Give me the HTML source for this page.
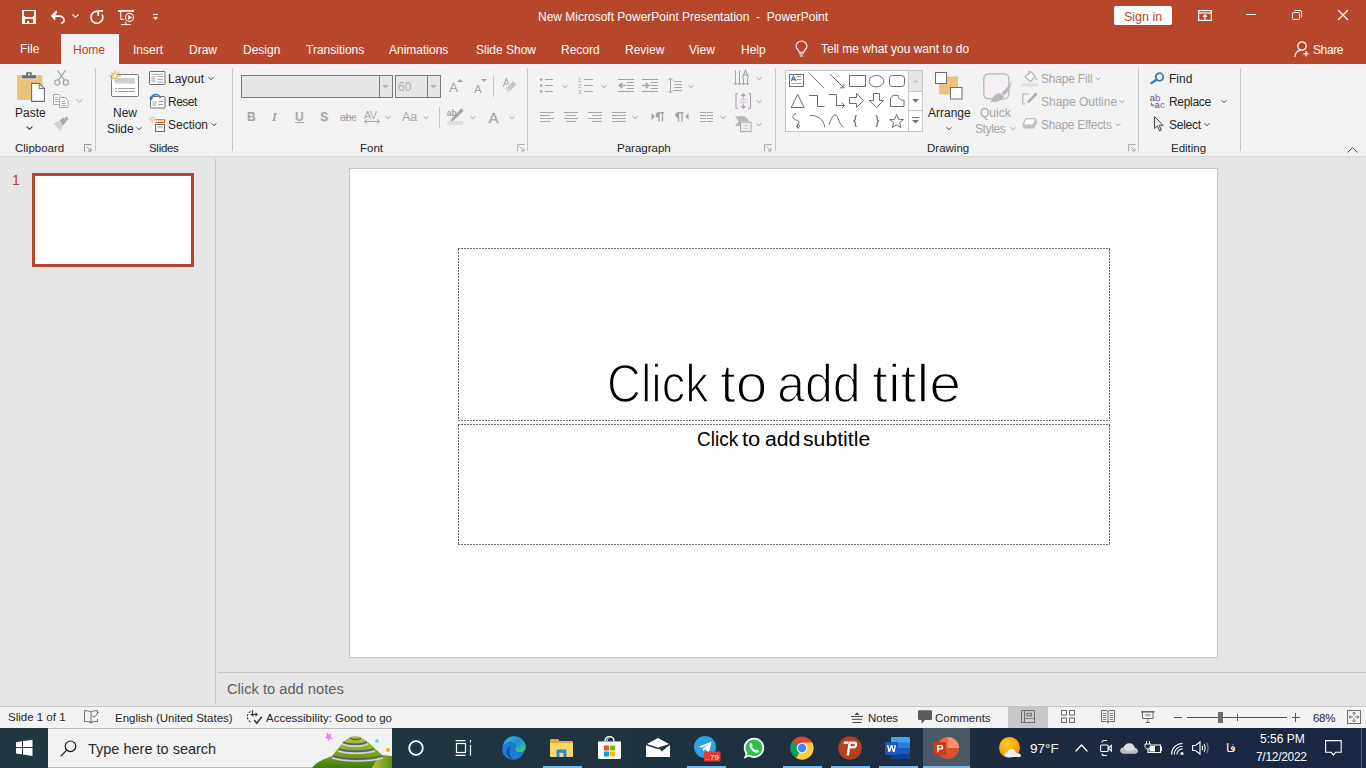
<!DOCTYPE html>
<html><head><meta charset="utf-8">
<style>
*{margin:0;padding:0;box-sizing:border-box}
html,body{width:1366px;height:768px;overflow:hidden;background:#e6e6e6;font-family:"Liberation Sans",sans-serif;color:#262626}
.a{position:absolute}
.t{position:absolute;white-space:nowrap;line-height:1}
svg{position:absolute;overflow:visible}
#top{left:0;top:0;width:1366px;height:64px;background:#b7472a}
#ribbon{left:0;top:64px;width:1366px;height:93px;background:#f3f3f3;border-bottom:1px solid #d6d6d6}
.sep{position:absolute;width:1px;background:#c8c8c8}
.w{color:#fff}
.gl{font-size:11.5px;color:#262626}
.dis{color:#a6a6a6}
</style></head><body>
<!-- title bar + tabs -->
<div id="top" class="a"></div>
<div class="t w" style="left:538px;top:11px;font-size:12px">New Microsoft PowerPoint Presentation&nbsp; -&nbsp; PowerPoint</div>
<div class="a" style="left:1114px;top:6px;width:58px;height:19px;background:#fff;border-radius:2px"></div>
<div class="t" style="left:1124px;top:11px;font-size:12.5px;color:#b7472a">Sign in</div>

<!-- QAT icons -->
<svg style="left:22px;top:10px" width="14" height="14" viewBox="0 0 14 14"><path d="M0 0H14V14H0Z" fill="#fff"/><path d="M2 1H12V6H11V7H3V6H2Z" fill="#b7472a"/><path d="M3 9H11V13H7.1V11H4.9V13H3Z" fill="#b7472a"/></svg>
<svg style="left:50px;top:9px" width="16" height="15" viewBox="0 0 16 15"><path d="M4 7.2H9C12 7.2 14 9.2 14 11.3C14 13 13 13.8 11.5 14" fill="none" stroke="#fff" stroke-width="1.7" stroke-linecap="round"/><path d="M6.5 1.2L0.8 6.8L5 11.5L5.5 8.5L4.5 7.2L7 4Z" fill="#fff"/></svg>
<svg style="left:72px;top:14px" width="7" height="4" viewBox="0 0 7 4" fill="none" stroke="#fff" stroke-width="1.1"><path d="M0.5 0.5L3.5 3.3L6.5 0.5"/></svg>
<svg style="left:89px;top:10px" width="15" height="14" viewBox="0 0 15 14" fill="none" stroke="#fff" stroke-width="1.6"><path d="M8.4 1.3A6 6 0 1 0 13.2 4.5"/><path d="M8.5 0.9H14M9.2 0.9V6"/></svg>
<svg style="left:118px;top:10px" width="17" height="16" viewBox="0 0 17 16" fill="none" stroke="#fff"><path d="M0 0.9H16" stroke-width="1.8"/><path d="M2.8 1.5V9.3H6" stroke-width="1.1"/><circle cx="11.5" cy="7.4" r="4" stroke-width="1.1"/><path d="M10.6 5.6L13.6 7.5L10.6 9.4Z" fill="#fff" stroke-width="0.6"/><path d="M3 14.6H12.8" stroke-width="1"/><path d="M7.3 12L8.3 13.8" stroke-width="1.1"/></svg>
<svg style="left:153px;top:14px" width="5" height="6" viewBox="0 0 5 6" fill="#fff"><rect x="0" y="0" width="5" height="1"/><path d="M0 3H5L2.5 6Z"/></svg>
<!-- window controls -->
<svg style="left:1198px;top:10px" width="14" height="11" viewBox="0 0 14 11" fill="none" stroke="#fff" stroke-width="1.2"><rect x="0.6" y="0.6" width="12.8" height="9.8"/><path d="M0.6 3H13.4"/><path d="M7 10V5M5 6.8L7 4.8L9 6.8"/></svg>
<svg style="left:1246px;top:14px" width="10" height="1" viewBox="0 0 10 1"><rect width="10" height="1" fill="#fff"/></svg>
<svg style="left:1292px;top:10px" width="10" height="10" viewBox="0 0 10 10" fill="none" stroke="#fff" stroke-width="1"><rect x="0.5" y="2.5" width="7" height="7" rx="1"/><path d="M2.5 0.5H8A1.5 1.5 0 0 1 9.5 2V7.5"/></svg>
<svg style="left:1338px;top:10px" width="10" height="10" viewBox="0 0 10 10" fill="none" stroke="#fff" stroke-width="1.1"><path d="M0 0L10 10M10 0L0 10"/></svg>
<!-- lightbulb & share -->
<svg style="left:795px;top:41px" width="13" height="16" viewBox="0 0 13 16" fill="none" stroke="#fff" stroke-width="1.1"><path d="M4.2 11.2C4.2 9.2 1 8 1 5.5A5.5 5.5 0 0 1 12 5.5C12 8 8.8 9.2 8.8 11.2Z"/><path d="M4.3 13H8.7M5 15H8"/></svg>
<svg style="left:1294px;top:41px" width="16" height="16" viewBox="0 0 16 16" fill="none" stroke="#fff" stroke-width="1.2"><circle cx="8" cy="5" r="4.2"/><path d="M0.8 15.8C1.5 11.5 4 9.3 7 9.1"/><path d="M12 10V15.5M9.3 12.8H14.7"/></svg>

<!-- tabs -->
<div class="a" style="left:61px;top:34px;width:58px;height:30px;background:#f3f3f3"></div>
<div class="t w" style="left:20px;top:43px;font-size:12px">File</div>
<div class="t" style="left:73px;top:44px;font-size:12px;color:#b7472a">Home</div>
<div class="t w" style="left:133px;top:44px;font-size:12px">Insert</div>
<div class="t w" style="left:189px;top:44px;font-size:12px">Draw</div>
<div class="t w" style="left:243px;top:44px;font-size:12px">Design</div>
<div class="t w" style="left:306px;top:44px;font-size:12px">Transitions</div>
<div class="t w" style="left:389px;top:44px;font-size:12px">Animations</div>
<div class="t w" style="left:476px;top:44px;font-size:12px">Slide Show</div>
<div class="t w" style="left:561px;top:44px;font-size:12px">Record</div>
<div class="t w" style="left:625px;top:44px;font-size:12px">Review</div>
<div class="t w" style="left:689px;top:44px;font-size:12px">View</div>
<div class="t w" style="left:741px;top:44px;font-size:12px">Help</div>
<div class="t w" style="left:821px;top:43px;font-size:12px">Tell me what you want to do</div>
<div class="t w" style="left:1313px;top:44px;font-size:12px;letter-spacing:-0.4px">Share</div>

<!-- ribbon -->
<div id="ribbon" class="a"></div>
<div class="sep" style="left:95px;top:68px;height:83px"></div>
<div class="sep" style="left:232px;top:68px;height:83px"></div>
<div class="sep" style="left:527px;top:68px;height:83px"></div>
<div class="sep" style="left:775px;top:68px;height:83px"></div>
<div class="sep" style="left:1138px;top:68px;height:83px"></div>
<div class="sep" style="left:1240px;top:68px;height:83px"></div>
<div class="t gl" style="left:15px;top:143px">Clipboard</div>
<div class="t gl" style="left:149px;top:143px;letter-spacing:-0.3px">Slides</div>
<div class="t gl" style="left:360px;top:143px">Font</div>
<div class="t gl" style="left:617px;top:143px">Paragraph</div>
<div class="t gl" style="left:927px;top:143px">Drawing</div>
<div class="t gl" style="left:1171px;top:143px">Editing</div>


<!-- Clipboard group -->
<svg style="left:17px;top:72px" width="29" height="31" viewBox="0 0 29 31">
<path d="M2 3H24A1.5 1.5 0 0 1 25.5 4.5V26.5A1.5 1.5 0 0 1 24 28H1.5A1.5 1.5 0 0 1 0 26.5V4.5A1.5 1.5 0 0 1 1.5 3Z" fill="#ebc47c"/>
<path d="M5 3.2H19V6.8H5Z" fill="#6e6e6e"/><path d="M9.3 0.2H14.7V3.5H9.3Z" fill="#6e6e6e"/><rect x="11.2" y="1.6" width="1.8" height="1.8" fill="#f3f3f3"/>
<path d="M3.8 6.9H20.2" stroke="#f3f3f3" stroke-width="0.8"/>
<path d="M14.6 11.4H22.2L27.4 16.6V29.4H14.6Z" fill="#fff" stroke="#6e6e6e" stroke-width="1.1"/><path d="M22.2 11.4V16.6H27.4" fill="none" stroke="#6e6e6e" stroke-width="1"/>
</svg>
<div class="t" style="left:15px;top:107px;font-size:12px;color:#262626">Paste</div>
<svg style="left:26px;top:126px" width="7" height="4" viewBox="0 0 7 4" fill="none" stroke="#444" stroke-width="1.1"><path d="M0.6 0.6L3.5 3.2L6.4 0.6"/></svg>
<svg style="left:54px;top:70px" width="15" height="16" viewBox="0 0 15 16" fill="none" stroke="#a8a8a8" stroke-width="1.3"><circle cx="3.2" cy="12.5" r="2.6"/><circle cx="11.8" cy="12.5" r="2.6"/><path d="M4.6 10.2L11.5 0.3M10.4 10.2L3.5 0.3"/></svg>
<svg style="left:53px;top:94px" width="16" height="14" viewBox="0 0 16 14" fill="#fff" stroke="#a8a8a8" stroke-width="1"><path d="M0.5 0.5H6L8 2.5V10.5H0.5Z"/><path d="M2 3.5H5M2 5.5H6M2 7.5H6" fill="none"/><path d="M6.5 3.5H12.5L15 6V13.5H6.5Z"/><path d="M8.5 7.5H12M8.5 9.5H13M8.5 11.5H13" fill="none"/></svg>
<svg style="left:76px;top:99px" width="7" height="4" viewBox="0 0 7 4" fill="none" stroke="#a8a8a8" stroke-width="1"><path d="M0.6 0.6L3.5 3.2L6.4 0.6"/></svg>
<svg style="left:53px;top:117px" width="16" height="14" viewBox="0 0 16 14"><path d="M0.5 6.5L6 3.8L10 9L7.5 13.8Z" fill="#d4d0d4"/><path d="M6.5 3.5L10.5 0.5L13.5 4.5L10 8.6Z" fill="#a8a8a8"/><path d="M11.5 1.2L13.5 -0.5L15.6 2L13.6 3.9Z" fill="#a8a8a8"/></svg>
<svg style="left:84px;top:144px" width="8" height="8" viewBox="0 0 8 8" fill="none" stroke="#8a8a8a" stroke-width="0.9"><path d="M0.5 7.5V0.5H7.5"/><path d="M2.5 2.5L7 7M7 4V7H4"/></svg>

<!-- Slides group -->
<svg style="left:109px;top:70px" width="31" height="28" viewBox="0 0 31 28">
<rect x="2.5" y="4.5" width="27" height="22" rx="1.2" fill="#fff" stroke="#7a7a7a" stroke-width="1"/>
<rect x="6" y="8" width="20" height="5.6" fill="#d0d0d0"/>
<path d="M6 18.6H8M9.2 18.6H26M6 21.5H8M9.2 21.5H26" stroke="#8a8a8a" stroke-width="0.9"/>
<g stroke="#ebc47c" stroke-width="1.4"><path d="M6 0V11.8M0 6H12M1.8 1.8L10.2 10.2M10.2 1.8L1.8 10.2"/></g><circle cx="6" cy="6" r="3" fill="#ebc47c"/><circle cx="6" cy="6" r="1.8" fill="#fff"/>
</svg>
<div class="t" style="left:113px;top:107px;font-size:12px">New</div>
<div class="t" style="left:107px;top:123px;font-size:12px">Slide</div>
<svg style="left:136px;top:127px" width="6" height="3" viewBox="0 0 6 3" fill="none" stroke="#444" stroke-width="1"><path d="M0.5 0.4L3 2.6L5.5 0.4"/></svg>
<svg style="left:149px;top:71px" width="17" height="14" viewBox="0 0 17 14" fill="none" stroke="#6e6e6e" stroke-width="1"><rect x="0.5" y="0.5" width="15.5" height="13" rx="0.8" fill="#fff"/><path d="M2.3 3.3H14.2" stroke="#b8b8b8" stroke-width="1.2"/><rect x="2.3" y="5" width="4.3" height="6.3" fill="#d0d0d0" stroke="none"/><path d="M8.3 5.5H14M8.3 8.3H14M8.3 11H14" stroke="#9a9a9a" stroke-width="0.9"/></svg>
<div class="t" style="left:168px;top:73px;font-size:12px">Layout</div>
<svg style="left:208px;top:77px" width="6" height="3" viewBox="0 0 6 3" fill="none" stroke="#444" stroke-width="1"><path d="M0.5 0.4L3 2.6L5.5 0.4"/></svg>
<svg style="left:149px;top:93px" width="17" height="16" viewBox="0 0 17 16"><rect x="1.5" y="3.5" width="14.5" height="11.5" rx="0.8" fill="#fff" stroke="#6e6e6e" stroke-width="1"/><rect x="3.5" y="8" width="4" height="5" fill="#d0d0d0"/><path d="M9.3 8.5H14M9.3 11.5H14" stroke="#9a9a9a" stroke-width="1"/><path d="M11.5 5C10.5 2.2 7.5 1 5 1.8C3.5 2.3 2.5 3.5 2.2 5" fill="none" stroke="#3c7cc0" stroke-width="1.8"/><path d="M0 4.2L4.6 4.4L1.8 8Z" fill="#3c7cc0"/></svg>
<div class="t" style="left:168px;top:96px;font-size:12px;letter-spacing:-0.5px">Reset</div>
<svg style="left:149px;top:116px" width="17" height="16" viewBox="0 0 17 16"><g stroke="#ebc47c" stroke-width="1"><path d="M3.4 0V6.8M0 3.4H6.8M1 1L5.8 5.8M5.8 1L1 5.8"/></g><circle cx="3.4" cy="3.4" r="1.7" fill="#ebc47c"/><circle cx="3.4" cy="3.4" r="1" fill="#fff"/><path d="M6.5 3.8H15.5V6.5H6.5" fill="none" stroke="#d9631e" stroke-width="1.1"/><rect x="6.5" y="8.5" width="9" height="7" fill="#fff" stroke="#6e6e6e" stroke-width="1"/><rect x="8" y="10" width="6" height="1.8" fill="#c8c8c8"/></svg>
<div class="t" style="left:168px;top:119px;font-size:12px">Section</div>
<svg style="left:211px;top:123px" width="6" height="3" viewBox="0 0 6 3" fill="none" stroke="#444" stroke-width="1"><path d="M0.5 0.4L3 2.6L5.5 0.4"/></svg>


<!-- Font group -->
<div class="a" style="left:241px;top:75px;width:152px;height:23px;background:#e6e6e6;border:1px solid #7a7a7a"></div>
<div class="a" style="left:379px;top:76px;width:1px;height:21px;background:#7a7a7a"></div>
<svg style="left:382px;top:85px" width="7" height="4" viewBox="0 0 7 4"><path d="M0 0H7L3.5 3.5Z" fill="#b4b4b4"/></svg>
<div class="a" style="left:395px;top:75px;width:46px;height:23px;background:#e6e6e6;border:1px solid #7a7a7a"></div>
<div class="a" style="left:427px;top:76px;width:1px;height:21px;background:#7a7a7a"></div>
<svg style="left:430px;top:85px" width="7" height="4" viewBox="0 0 7 4"><path d="M0 0H7L3.5 3.5Z" fill="#b4b4b4"/></svg>
<div class="t" style="left:398px;top:81px;font-size:12px;color:#b0b0b0">60</div>
<div class="t" style="left:449px;top:81px;font-size:13.5px;color:#a6a6a6">A</div>
<svg style="left:457px;top:79px" width="6" height="3" viewBox="0 0 6 3"><path d="M0 3H6L3 0Z" fill="#a6a6a6"/></svg>
<div class="t" style="left:474px;top:83.5px;font-size:11.5px;color:#a6a6a6">A</div>
<svg style="left:481px;top:79px" width="6" height="3" viewBox="0 0 6 3"><path d="M0 0H6L3 3Z" fill="#a6a6a6"/></svg>
<div class="a" style="left:493px;top:76px;width:1px;height:21px;background:#c8c8c8"></div>
<svg style="left:502px;top:78px" width="16" height="17" viewBox="0 0 16 17"><path d="M1.2 8.6L4.3 0.9L6.6 5.5M2.3 6H6.3" fill="none" stroke="#a6a6a6" stroke-width="1.1"/><path d="M11.2 3L14.6 6.6L8.3 12.6L5.2 9.2Z" fill="#c4c4c4"/><path d="M3.2 10.3L4.5 9.4L7.8 12.9L6.3 14.3Z" fill="#cfcfcf"/></svg>
<div class="t" style="left:247px;top:111px;font-size:12px;font-weight:bold;color:#a6a6a6">B</div>
<div class="t" style="left:272px;top:111px;font-size:12.5px;font-style:italic;font-weight:bold;font-family:'Liberation Serif',serif;color:#a6a6a6">I</div>
<div class="t" style="left:295px;top:111px;font-size:12px;font-weight:bold;color:#a6a6a6">U</div>
<div class="a" style="left:295px;top:122px;width:9px;height:1px;background:#a6a6a6"></div>
<div class="t" style="left:321px;top:112px;font-size:12px;font-weight:bold;color:#d8d8d8">S</div>
<div class="t" style="left:320px;top:111px;font-size:12px;font-weight:bold;color:#a6a6a6">S</div>
<div class="t" style="left:340px;top:112px;font-size:11px;color:#a6a6a6;letter-spacing:-0.5px">abc</div>
<div class="a" style="left:340px;top:117px;width:16px;height:1px;background:#a6a6a6"></div>
<div class="t" style="left:364px;top:110px;font-size:10.5px;color:#a6a6a6;letter-spacing:-0.3px">AV</div>
<svg style="left:364px;top:119px" width="16" height="5" viewBox="0 0 16 5" fill="none" stroke="#a6a6a6" stroke-width="1"><path d="M0.5 2.5H15.5M3 0.3L0.5 2.5L3 4.7M13 0.3L15.5 2.5L13 4.7"/></svg>
<svg style="left:385px;top:116px" width="6" height="3" viewBox="0 0 6 3" fill="none" stroke="#a6a6a6" stroke-width="1"><path d="M0.5 0.4L3 2.6L5.5 0.4"/></svg>
<div class="t" style="left:402px;top:111px;font-size:12.5px;color:#a6a6a6">Aa</div>
<svg style="left:423px;top:116px" width="6" height="3" viewBox="0 0 6 3" fill="none" stroke="#a6a6a6" stroke-width="1"><path d="M0.5 0.4L3 2.6L5.5 0.4"/></svg>
<div class="a" style="left:439px;top:107px;width:1px;height:21px;background:#c8c8c8"></div>
<svg style="left:447px;top:108px" width="17" height="18" viewBox="0 0 17 18"><text x="-0.3" y="7.7" font-family="Liberation Sans" font-size="8.5" font-weight="bold" fill="#a6a6a6">ab</text><path d="M15.8 2.8L14.2 1.3L5.6 10.5L4.2 12.8L6.5 11.8Z" fill="#a6a6a6" stroke="#a6a6a6" stroke-width="1.2" stroke-linejoin="round"/><rect x="0" y="13" width="16" height="4" fill="#e6dee6"/></svg>
<svg style="left:470px;top:116px" width="6" height="3" viewBox="0 0 6 3" fill="none" stroke="#a6a6a6" stroke-width="1"><path d="M0.5 0.4L3 2.6L5.5 0.4"/></svg>
<div class="t" style="left:488.5px;top:109.5px;font-size:15px;color:#a6a6a6;-webkit-text-stroke:0.3px #a6a6a6">A</div>
<svg style="left:509px;top:116px" width="6" height="3" viewBox="0 0 6 3" fill="none" stroke="#a6a6a6" stroke-width="1"><path d="M0.5 0.4L3 2.6L5.5 0.4"/></svg>
<svg style="left:517px;top:144px" width="8" height="8" viewBox="0 0 8 8" fill="none" stroke="#a6a6a6" stroke-width="0.9"><path d="M0.5 7.5V0.5H7.5"/><path d="M2.5 2.5L7 7M7 4V7H4"/></svg>


<!-- Paragraph group -->
<svg style="left:539px;top:77px" width="16" height="16" viewBox="0 0 16 16" fill="#a6a6a6"><circle cx="2.2" cy="2.5" r="1.3"/><circle cx="2.2" cy="8.5" r="1.3"/><circle cx="2.2" cy="14.5" r="1.3"/><path d="M6 2.5H14M6 8.5H14M6 14.5H14" stroke="#a6a6a6" stroke-width="1"/></svg>
<svg style="left:562px;top:85px" width="6" height="3" viewBox="0 0 6 3" fill="none" stroke="#a6a6a6" stroke-width="1"><path d="M0.5 0.4L3 2.6L5.5 0.4"/></svg>

<svg style="left:578px;top:77px" width="16" height="18" viewBox="0 0 16 18" fill="#a6a6a6"><text x="0" y="4.8" font-family="Liberation Sans" font-size="5.8">1</text><text x="0" y="10.8" font-family="Liberation Sans" font-size="5.8">2</text><text x="0" y="16.8" font-family="Liberation Sans" font-size="5.8">3</text><path d="M6.3 2.5H15M6.3 8.5H15M6.3 14.5H15" stroke="#a6a6a6" stroke-width="1"/></svg>
<svg style="left:601px;top:85px" width="6" height="3" viewBox="0 0 6 3" fill="none" stroke="#a6a6a6" stroke-width="1"><path d="M0.5 0.4L3 2.6L5.5 0.4"/></svg>

<svg style="left:618px;top:78px" width="16" height="14" viewBox="0 0 16 14" fill="none" stroke="#a6a6a6" stroke-width="1"><path d="M0 1.5H16M8.5 4.5H16M8.5 7.5H16M8.5 10.5H16M0 13.5H16"/><path d="M7.5 7.5H1.5M4.2 4.8L1.4 7.5L4.2 10.2" stroke-width="1.6"/></svg>
<svg style="left:642px;top:78px" width="16" height="14" viewBox="0 0 16 14" fill="none" stroke="#a6a6a6" stroke-width="1"><path d="M0 1.5H16M8.5 4.5H16M8.5 7.5H16M8.5 10.5H16M0 13.5H16"/><path d="M0 7.5H6.5M3.8 4.8L6.6 7.5L3.8 10.2" stroke-width="1.6"/></svg>
<svg style="left:667px;top:77px" width="16" height="17" viewBox="0 0 16 17" fill="none" stroke="#a6a6a6" stroke-width="1"><path d="M3.5 1V16M1 3.5L3.5 1L6 3.5M1 13.5L3.5 16L6 13.5"/><path d="M7 4.5H15M7 7.5H15M7 10.5H15M7 13.5H15"/></svg>
<svg style="left:688px;top:85px" width="6" height="3" viewBox="0 0 6 3" fill="none" stroke="#a6a6a6" stroke-width="1"><path d="M0.5 0.4L3 2.6L5.5 0.4"/></svg>

<svg style="left:734px;top:70px" width="17" height="16" viewBox="0 0 17 16" fill="none" stroke="#a6a6a6" stroke-width="1"><path d="M1.5 0.5V15M5.5 0.5V15M0 13L1.5 15L3 13M4 13L5.5 15L7 13"/><path d="M9.5 15V8M13.5 15V8M8 13L9.5 15L11 13M12 13L13.5 15L15 13"/><path d="M8.5 7.5L11.5 0.3L14.5 7.5M9.5 5H13.5" stroke-width="1.2"/></svg>
<svg style="left:756px;top:77px" width="6" height="3" viewBox="0 0 6 3" fill="none" stroke="#a6a6a6" stroke-width="1"><path d="M0.5 0.4L3 2.6L5.5 0.4"/></svg>

<svg style="left:735px;top:93px" width="16" height="16" viewBox="0 0 16 16"><path d="M2.5 1.5H14V15H2.5Z" fill="#f6eef6"/><path d="M3 0.8H1V15.2H3M13 0.8H15.5V15.2H13" fill="none" stroke="#a6a6a6" stroke-width="1.1"/><path d="M8.3 1V5.5M6.2 3L8.3 0.8L10.4 3M8.3 15V10.5M6.2 13L8.3 15.2L10.4 13" fill="none" stroke="#a6a6a6" stroke-width="1.1"/><path d="M3.8 6.7H4.4M5.5 6.7H12.5M3.8 9.2H4.4M5.5 9.2H12.5" stroke="#b8b8b8" stroke-width="0.8"/></svg>
<svg style="left:756px;top:100px" width="6" height="3" viewBox="0 0 6 3" fill="none" stroke="#a6a6a6" stroke-width="1"><path d="M0.5 0.4L3 2.6L5.5 0.4"/></svg>

<svg style="left:735px;top:116px" width="17" height="16" viewBox="0 0 17 16"><path d="M0 0.3H10L15 5.5H5.2L5 10H0L3.5 5.5Z" fill="#b8b8b8"/><rect x="5.5" y="6.3" width="10.5" height="9.3" fill="#f6eef6" stroke="#a6a6a6" stroke-width="1"/><path d="M7.8 9.3H8.4M9.7 9.3H12.8M7.8 12.3H8.4M9.7 12.3H12.8" stroke="#b0b0b0" stroke-width="0.9"/></svg>
<svg style="left:756px;top:123px" width="6" height="3" viewBox="0 0 6 3" fill="none" stroke="#a6a6a6" stroke-width="1"><path d="M0.5 0.4L3 2.6L5.5 0.4"/></svg>

<svg style="left:540px;top:111px" width="14" height="11" viewBox="0 0 14 11" fill="none" stroke="#a6a6a6" stroke-width="1"><path d="M0 1.5H14M0 4.5H10M0 7.5H14M0 10.5H10"/></svg>
<svg style="left:564px;top:111px" width="14" height="11" viewBox="0 0 14 11" fill="none" stroke="#a6a6a6" stroke-width="1"><path d="M0 1.5H14M2 4.5H12M0 7.5H14M2 10.5H12"/></svg>
<svg style="left:588px;top:111px" width="14" height="11" viewBox="0 0 14 11" fill="none" stroke="#a6a6a6" stroke-width="1"><path d="M0 1.5H14M4 4.5H14M0 7.5H14M4 10.5H14"/></svg>
<svg style="left:612px;top:111px" width="14" height="11" viewBox="0 0 14 11" fill="none" stroke="#a6a6a6" stroke-width="1"><path d="M0 1.5H14M0 4.5H14M0 7.5H14M0 10.5H14"/></svg>
<svg style="left:632px;top:116px" width="6" height="3" viewBox="0 0 6 3" fill="none" stroke="#a6a6a6" stroke-width="1"><path d="M0.5 0.4L3 2.6L5.5 0.4"/></svg>

<svg style="left:651px;top:112px" width="14" height="10" viewBox="0 0 14 10"><path d="M0.5 1L3.8 4.5L0.5 8Z" fill="#a6a6a6"/><path d="M8 9.5V0.8M11.5 9.5V0.8M6.5 0.8H13M8 5.2C4.5 5.2 4.5 0.8 8 0.8" fill="#a6a6a6" stroke="#a6a6a6" stroke-width="1.4"/></svg>
<svg style="left:675px;top:112px" width="14" height="10" viewBox="0 0 14 10"><path d="M3.5 9.5V0.8M7 9.5V0.8M2 0.8H8.5M3.5 5.2C0 5.2 0 0.8 3.5 0.8" fill="#a6a6a6" stroke="#a6a6a6" stroke-width="1.4"/><path d="M13.5 1L10.2 4.5L13.5 8Z" fill="#a6a6a6"/></svg>
<svg style="left:700px;top:112px" width="14" height="10" viewBox="0 0 14 10" fill="none" stroke="#a6a6a6" stroke-width="1"><path d="M0 0.5H6M0 3.5H6M0 6.5H6M0 9.5H6M7 0.5H13M7 3.5H13M7 6.5H13M7 9.5H13"/></svg>
<svg style="left:720px;top:116px" width="6" height="3" viewBox="0 0 6 3" fill="none" stroke="#a6a6a6" stroke-width="1"><path d="M0.5 0.4L3 2.6L5.5 0.4"/></svg>

<svg style="left:764px;top:144px" width="8" height="8" viewBox="0 0 8 8" fill="none" stroke="#a6a6a6" stroke-width="0.9"><path d="M0.5 7.5V0.5H7.5"/><path d="M2.5 2.5L7 7M7 4V7H4"/></svg>


<!-- Drawing group -->
<div class="a" style="left:785px;top:70px;width:138px;height:62px;background:#fff;border:1px solid #c6c6c6"></div>
<div class="a" style="left:908px;top:71px;width:1px;height:60px;background:#c6c6c6"></div>
<div class="a" style="left:909px;top:71px;width:13px;height:20px;background:#e6e6e6"></div>
<div class="a" style="left:909px;top:91px;width:13px;height:1px;background:#c6c6c6"></div>
<div class="a" style="left:909px;top:110px;width:13px;height:1px;background:#c6c6c6"></div>
<svg style="left:912px;top:79px" width="7" height="4" viewBox="0 0 7 4"><path d="M0 3.5H7L3.5 0Z" fill="#c8c8c8"/></svg>
<svg style="left:912px;top:99px" width="7" height="4" viewBox="0 0 7 4"><path d="M0 0H7L3.5 3.5Z" fill="#6e6e6e"/></svg>
<svg style="left:912px;top:117px" width="7" height="7" viewBox="0 0 7 7"><rect x="0" y="0" width="7" height="1" fill="#6e6e6e"/><path d="M0 3H7L3.5 6.5Z" fill="#6e6e6e"/></svg>
<svg style="left:788px;top:73px" width="120" height="57" viewBox="0 0 120 57" fill="none" stroke="#6e6e6e" stroke-width="1">
<rect x="1.5" y="1.5" width="14" height="12"/><path d="M3.3 8L5.5 3L7.8 8M4 6.5H7" stroke="#3c7cc0" stroke-width="1.3"/><path d="M8.8 3.5H13.5M8.8 6.5H13.5M3.5 10.5H13.5" stroke="#a6a6a6"/>
<path d="M22 1L35.7 14.8"/>
<path d="M42 1L55.8 14.8M51.8 14.8H55.8V10.8"/>
<rect x="61.5" y="2.5" width="16" height="11"/>
<ellipse cx="88.4" cy="8.2" rx="7.4" ry="5.7"/>
<rect x="101.5" y="2.5" width="15" height="11" rx="2.8"/>
<path d="M3.2 34.5H16.2L9.7 21.5Z"/>
<path d="M21 22.5H29.5V33.5H36.5"/>
<path d="M41 21.5H48.5V32.5H56.5M53.8 29.8L56.5 32.5L53.8 35.2"/>
<path d="M61.5 24.5H68.5V20.5L75.5 27.5L68.5 34.5V30.5H61.5Z"/>
<path d="M85.5 20.5V27.5H81.5L88.5 34.5L95.5 27.5H91.5V20.5Z"/>
<path d="M102.5 25L105.3 22.3H110C110 25.2 112.6 27.5 116 27.2V33.5H102.5Z"/>
<path d="M8 40.5C5 41 4 44 6 46C8 48 11 46.5 11 49.5C11 52 8.5 52 8.5 53.5C8.5 55 11.5 55 11.5 53C11.5 51 9 51.5 9.5 54L10.5 55.8"/>
<path d="M22 42.3C29 42.3 36.5 46.5 36.5 54"/>
<path d="M41 51.5C43 47 44.5 42 47 42C50.5 42 51.5 54 56 54"/>
<path d="M68.8 42.5C67.2 42.5 67.3 43.5 67.3 45.5C67.3 47 67 48 65.3 48C67 48 67.3 49 67.3 50.5C67.3 52.5 67.2 53.5 68.8 53.5" stroke-width="1.2"/>
<path d="M87.7 42.5C89.3 42.5 89.2 43.5 89.2 45.5C89.2 47 89.5 48 91.2 48C89.5 48 89.2 49 89.2 50.5C89.2 52.5 89.3 53.5 87.7 53.5" stroke-width="1.2"/>
<path d="M108.6 41.5L110.5 46.3L115.6 46.5L111.6 49.7L113 54.6L108.6 51.8L104.2 54.6L105.6 49.7L101.6 46.5L106.7 46.3Z"/>
</svg>
<svg style="left:935px;top:72px" width="28" height="28" viewBox="0 0 28 28"><rect x="4" y="4.5" width="19" height="18" fill="#ebc47c"/><rect x="0.5" y="0.5" width="11" height="11" fill="#fff" stroke="#6e6e6e" stroke-width="1"/><rect x="15.5" y="15.5" width="11.5" height="11.5" fill="#fff" stroke="#6e6e6e" stroke-width="1"/></svg>
<div class="t" style="left:928px;top:107px;font-size:12px">Arrange</div>
<svg style="left:946px;top:127px" width="6" height="3" viewBox="0 0 6 3" fill="none" stroke="#444" stroke-width="1"><path d="M0.5 0.4L3 2.6L5.5 0.4"/></svg>
<svg style="left:983px;top:73px" width="30" height="30" viewBox="0 0 30 30"><rect x="0.8" y="0.8" width="25" height="25" rx="4.5" fill="#f6f0f6" stroke="#b4b4b4" stroke-width="1.2"/><path d="M29 8L26 17.5L21 22.5L18.5 20L23.5 15Z" fill="#b8b8b8"/><path d="M18 20.5L21 23.5C19 26.5 16.5 29.5 7.5 29C9 27 9.5 24.5 11.5 22.5C13.5 20.5 16 20 18 20.5Z" fill="#b8b8b8"/></svg>
<div class="t" style="left:980px;top:107px;font-size:12px;color:#a6a6a6">Quick</div>
<div class="t" style="left:975px;top:123px;font-size:12px;color:#a6a6a6;letter-spacing:-0.4px">Styles</div>
<svg style="left:1010px;top:127px" width="6" height="3" viewBox="0 0 6 3" fill="none" stroke="#a6a6a6" stroke-width="1"><path d="M0.5 0.4L3 2.6L5.5 0.4"/></svg>
<svg style="left:1022px;top:70px" width="17" height="17" viewBox="0 0 17 17"><path d="M3 6.5L8.5 1.5L13.5 6.5L8.5 11.5Z" fill="#fff" stroke="#b0b0b0" stroke-width="1.1"/><path d="M6.8 0.5V5" stroke="#b0b0b0" stroke-width="1"/><path d="M14.3 7.5C15.5 9 15.5 10 14.3 10.2C13.2 10 13.2 9 14.3 7.5Z" fill="#b0b0b0"/><rect x="0" y="13.5" width="16" height="3" fill="#e6dce6"/></svg>
<div class="t" style="left:1041px;top:73px;font-size:12px;color:#a6a6a6;letter-spacing:-0.2px">Shape Fill</div>
<svg style="left:1095px;top:77px" width="6" height="3" viewBox="0 0 6 3" fill="none" stroke="#a6a6a6" stroke-width="1"><path d="M0.5 0.4L3 2.6L5.5 0.4"/></svg>
<svg style="left:1022px;top:93px" width="16" height="12" viewBox="0 0 16 12" fill="none" stroke="#b0b0b0" stroke-width="1.1"><path d="M7 1H0.8V11H3"/><path d="M14.8 1.5L7.5 8.8L5.8 9.4L6.4 7.7L13.7 0.4Z" fill="#b0b0b0"/></svg>
<div class="t" style="left:1041px;top:96px;font-size:12px;color:#a6a6a6">Shape Outline</div>
<svg style="left:1119px;top:100px" width="6" height="3" viewBox="0 0 6 3" fill="none" stroke="#a6a6a6" stroke-width="1"><path d="M0.5 0.4L3 2.6L5.5 0.4"/></svg>
<svg style="left:1022px;top:118px" width="16" height="12" viewBox="0 0 16 12"><path d="M3.5 0.5H14L15.5 4L12 10.5H1L0.5 6Z" fill="#d8d8d8"/><path d="M3.8 0.8H13.8L11 7H1Z" fill="#fff" stroke="#b0b0b0" stroke-width="1"/><path d="M1 7H11L13.8 0.8L15.3 4L12 10.3H1.5Z" fill="#c0c0c0"/></svg>
<div class="t" style="left:1041px;top:119px;font-size:12px;color:#a6a6a6;letter-spacing:-0.3px">Shape Effects</div>
<svg style="left:1115px;top:123px" width="6" height="3" viewBox="0 0 6 3" fill="none" stroke="#a6a6a6" stroke-width="1"><path d="M0.5 0.4L3 2.6L5.5 0.4"/></svg>
<svg style="left:1128px;top:144px" width="8" height="8" viewBox="0 0 8 8" fill="none" stroke="#a6a6a6" stroke-width="0.9"><path d="M0.5 7.5V0.5H7.5"/><path d="M2.5 2.5L7 7M7 4V7H4"/></svg>

<!-- Editing group -->
<svg style="left:1150px;top:72px" width="15" height="12" viewBox="0 0 15 12"><circle cx="9.5" cy="5" r="3.8" fill="none" stroke="#3c7cc0" stroke-width="1.8"/><path d="M6.8 7.6L1.5 11" stroke="#3c7cc0" stroke-width="2.4" stroke-linecap="round"/></svg>
<div class="t" style="left:1169px;top:73px;font-size:12px">Find</div>
<svg style="left:1150px;top:93px" width="17" height="16" viewBox="0 0 17 16"><text x="-0.3" y="7.6" font-family="Liberation Sans" font-size="9.5" fill="#555">a</text><text x="5" y="7.6" font-family="Liberation Sans" font-size="9.5" fill="#8a4fbf">b</text><text x="4.6" y="14.7" font-family="Liberation Sans" font-size="9.5" fill="#555">a</text><text x="10" y="14.7" font-family="Liberation Sans" font-size="9.5" fill="#3c7cc0">c</text><path d="M1.5 9.5V12.3H3.8M2.8 11.2L3.9 12.3L2.8 13.4" fill="none" stroke="#3c7cc0" stroke-width="1"/></svg>
<div class="t" style="left:1169px;top:96px;font-size:12px;letter-spacing:-0.3px">Replace</div>
<svg style="left:1221px;top:100px" width="6" height="3" viewBox="0 0 6 3" fill="none" stroke="#444" stroke-width="1"><path d="M0.5 0.4L3 2.6L5.5 0.4"/></svg>
<svg style="left:1154px;top:116px" width="10" height="16" viewBox="0 0 10 16" fill="none" stroke="#444" stroke-width="1"><path d="M0.6 0.6V12.5L3.4 10L5.6 15L7.3 14.2L5.2 9.3H9Z" stroke-linejoin="round"/></svg>
<div class="t" style="left:1169px;top:119px;font-size:12px;letter-spacing:-0.25px">Select</div>
<svg style="left:1204px;top:123px" width="6" height="3" viewBox="0 0 6 3" fill="none" stroke="#444" stroke-width="1"><path d="M0.5 0.4L3 2.6L5.5 0.4"/></svg>
<svg style="left:1347px;top:147px" width="11" height="6" viewBox="0 0 11 6" fill="none" stroke="#444" stroke-width="1"><path d="M0.5 5.5L5.5 0.7L10.5 5.5"/></svg>

<!-- workspace -->
<div class="a" style="left:215px;top:159px;width:1px;height:545px;background:#c6c6c6"></div>
<div class="t" style="left:12px;top:173px;font-size:14px;color:#b7472a">1</div>
<div class="a" style="left:32px;top:173px;width:162px;height:94px;background:#fff;border:3px solid #b7472a"></div>
<div class="a" style="left:349px;top:168px;width:869px;height:490px;background:#fff;border:1px solid #c6c6c6"></div>
<div class="a" style="left:458px;top:248px;width:652px;height:1px;background:repeating-linear-gradient(90deg,#6e6e6e 0 2px,transparent 2px 3px)"></div><div class="a" style="left:458px;top:420px;width:652px;height:1px;background:repeating-linear-gradient(90deg,#6e6e6e 0 2px,transparent 2px 3px)"></div><div class="a" style="left:458px;top:248px;width:1px;height:173px;background:repeating-linear-gradient(180deg,#6e6e6e 0 2px,transparent 2px 3px) 0 1px"></div><div class="a" style="left:1109px;top:248px;width:1px;height:173px;background:repeating-linear-gradient(180deg,#6e6e6e 0 2px,transparent 2px 3px) 0 1px"></div><div class="a" style="left:458px;top:424px;width:652px;height:1px;background:repeating-linear-gradient(90deg,#6e6e6e 0 2px,transparent 2px 3px)"></div><div class="a" style="left:458px;top:544px;width:652px;height:1px;background:repeating-linear-gradient(90deg,#6e6e6e 0 2px,transparent 2px 3px)"></div><div class="a" style="left:458px;top:424px;width:1px;height:121px;background:repeating-linear-gradient(180deg,#6e6e6e 0 2px,transparent 2px 3px) 0 1px"></div><div class="a" style="left:1109px;top:424px;width:1px;height:121px;background:repeating-linear-gradient(180deg,#6e6e6e 0 2px,transparent 2px 3px) 0 1px"></div>

<div class="t" style="left:607px;top:357px;font-size:53px;color:#000;-webkit-text-stroke:1.5px #fff;transform-origin:0 0;transform:scaleX(0.886)">Click</div><div class="t" style="left:720px;top:357px;font-size:53px;color:#000;-webkit-text-stroke:1.5px #fff;transform-origin:0 0;transform:scaleX(1.07)">to</div><div class="t" style="left:777px;top:357px;font-size:53px;color:#000;-webkit-text-stroke:1.5px #fff;transform-origin:0 0;transform:scaleX(0.947)">add</div><div class="t" style="left:871.5px;top:357px;font-size:53px;color:#000;-webkit-text-stroke:1.5px #fff;transform-origin:0 0;transform:scaleX(1.08)">title</div>
<div class="t" style="left:696.6px;top:429px;font-size:20px;color:#000;transform-origin:0 0;transform:scaleX(0.95)">Click</div><div class="t" style="left:742.3px;top:429px;font-size:20px;color:#000;transform-origin:0 0;transform:scaleX(1.1)">to</div><div class="t" style="left:765px;top:429px;font-size:20px;color:#000;transform-origin:0 0;transform:scaleX(1.06)">add</div><div class="t" style="left:803.2px;top:429px;font-size:20px;color:#000;transform-origin:0 0;transform:scaleX(1.06)">subtitle</div>
<div class="a" style="left:218px;top:672px;width:1148px;height:1px;background:#c6c6c6"></div>
<div class="t" style="left:227px;top:682px;font-size:14.7px;color:#5f5f5f">Click to add notes</div>

<!-- status bar -->
<div class="a" style="left:0;top:706px;width:1366px;height:22px;background:#f3f3f3;border-top:1px solid #c6c6c6"></div>
<div class="t" style="left:8px;top:712px;font-size:11.5px">Slide 1 of 1</div>
<div class="t" style="left:115px;top:713px;font-size:11.5px">English (United States)</div>
<div class="t" style="left:266px;top:713px;font-size:11.5px">Accessibility: Good to go</div>
<div class="t" style="left:868px;top:713px;font-size:11.5px">Notes</div>
<div class="t" style="left:935px;top:713px;font-size:11.5px">Comments</div>
<div class="a" style="left:1008px;top:707px;width:40px;height:21px;background:#c8c8c8"></div>
<div class="t" style="left:1313px;top:713px;font-size:11.5px;letter-spacing:-0.3px">68%</div>
<svg style="left:84px;top:710px" width="15" height="14" viewBox="0 0 15 14" fill="none" stroke="#6e6e6e" stroke-width="1"><path d="M0.5 0.8C2.5 0.5 4.5 0.8 7 1.8V12.5C4.5 11.5 2.5 11.3 0.5 11.6Z"/><path d="M7 1.8C9.5 0.8 11.5 0.5 13.5 0.8V4"/><path d="M13.5 9V11.6C11.5 11.3 9.5 11.5 7 12.5"/><path d="M8.3 5.5L10 7.5L14.5 2.3"/><path d="M5.5 11.3L7 13.3L8.5 11.3"/></svg>
<svg style="left:246px;top:710px" width="17" height="15" viewBox="0 0 17 15" fill="none" stroke="#3a3a3a" stroke-width="1.1"><path d="M4.5 1.5A6 6 0 0 0 5 12.3" stroke-dasharray="2.2 1.3"/><path d="M6.5 0V5.5M4.7 3.8L6.5 5.6L8.3 3.8M6.5 4.5H11M9.5 2.8L11.2 4.5L9.5 6.2"/><path d="M8.2 10L10.8 13.2L15.8 6.8" stroke-width="1.6"/></svg>
<svg style="left:851px;top:712px" width="12" height="12" viewBox="0 0 12 12"><path d="M3.5 3L6 0.3L8.5 3Z" fill="#4a4a4a"/><path d="M0 4.5H12M1 7.3H11M1.5 10.5H10.5" stroke="#4a4a4a" stroke-width="1" fill="none"/></svg>
<svg style="left:918px;top:710px" width="14" height="14" viewBox="0 0 14 14"><path d="M1.2 0.3H12.8A1.2 1.2 0 0 1 14 1.5V8.8A1.2 1.2 0 0 1 12.8 10H7L3.5 13.8V10H1.2A1.2 1.2 0 0 1 0 8.8V1.5A1.2 1.2 0 0 1 1.2 0.3Z" fill="#5a5a5a"/></svg>
<svg style="left:1021px;top:710px" width="14" height="13" viewBox="0 0 14 13" fill="none" stroke="#6e6e6e" stroke-width="1"><rect x="0.5" y="0.5" width="13" height="12"/><path d="M3.5 0.5V12.5M3.5 8.8H13.5"/><rect x="6" y="3.3" width="4.5" height="2.5"/><rect x="4" y="9.3" width="9" height="2.7" fill="#d0d0d0" stroke="none"/></svg>
<svg style="left:1061px;top:710px" width="14" height="13" viewBox="0 0 14 13" fill="none" stroke="#6e6e6e" stroke-width="1"><rect x="0.5" y="0.5" width="5" height="4.5"/><rect x="8.5" y="0.5" width="5" height="4.5"/><rect x="0.5" y="8" width="5" height="4.5"/><rect x="8.5" y="8" width="5" height="4.5"/></svg>
<svg style="left:1101px;top:710px" width="14" height="14" viewBox="0 0 14 14" fill="none" stroke="#6e6e6e" stroke-width="1"><path d="M0.5 0.5H5.5L7 1.5L8.5 0.5H13.5V11.5H8.5L7 12.5L5.5 11.5H0.5Z"/><path d="M7 1.5V13.5"/><path d="M2 3.5H5.5M2 5.5H5.5M2 7.5H5.5M2 9.5H5.5M8.5 3.5H12M8.5 5.5H12M8.5 7.5H12M8.5 9.5H12" stroke-width="0.8"/></svg>
<svg style="left:1141px;top:711px" width="14" height="12" viewBox="0 0 14 12" fill="none" stroke="#6e6e6e" stroke-width="1"><path d="M0 0.8H13.5" stroke-width="1.6"/><path d="M1.5 1V7.5H12V1M6.8 7.5V11.5M4.5 11.5H9M4 4H9.5"/></svg>
<div class="a" style="left:1174px;top:717px;width:8px;height:1px;background:#555"></div>
<div class="a" style="left:1187px;top:717px;width:100px;height:1px;background:#555"></div>
<div class="a" style="left:1237px;top:714px;width:1px;height:7px;background:#555"></div>
<div class="a" style="left:1218px;top:712px;width:5px;height:11px;background:#6e6e6e"></div>
<div class="a" style="left:1292px;top:717px;width:8px;height:1px;background:#555"></div>
<div class="a" style="left:1295px;top:713px;width:1px;height:9px;background:#555"></div>
<svg style="left:1347px;top:710px" width="14" height="14" viewBox="0 0 14 14" fill="none" stroke="#6e6e6e" stroke-width="1"><rect x="0.5" y="0.5" width="13" height="13"/><path d="M7 2V5.5M5.5 3.5L7 2L8.5 3.5M7 12V8.5M5.5 10.5L7 12L8.5 10.5M2 7H5.5M3.5 5.5L2 7L3.5 8.5M12 7H8.5M10.5 5.5L12 7L10.5 8.5"/></svg>


<!-- taskbar -->
<div class="a" style="left:0;top:728px;width:1366px;height:40px;background:linear-gradient(90deg,#20383f 0%,#1f3640 30%,#1e2f3f 60%,#1c2840 85%,#1b2641 100%)"></div>
<svg style="left:16px;top:740px" width="17" height="16" viewBox="0 0 17 16" fill="#fff"><path d="M0 2.2L6 1.3V7H0Z"/><path d="M7 1.1L16.5 0V7H7Z"/><path d="M0 8H6V14.2L0 13.5Z"/><path d="M7 8H16.5V16L7 14.5Z"/></svg>
<div class="a" style="left:48px;top:728px;width:344px;height:40px;background:#f2f2f2;border-top:1px solid #bdbdbd;border-bottom:1px solid #bdbdbd"></div>
<svg style="left:60px;top:740px" width="17" height="17" viewBox="0 0 17 17" fill="none" stroke="#1a1a1a" stroke-width="1.2"><circle cx="10.5" cy="6.3" r="5.3"/><path d="M6.7 10.1L0.6 16.3"/></svg>
<div class="t" style="left:88px;top:742px;font-size:14.5px;color:#2b2b2b">Type here to search</div>
<svg style="left:312px;top:731px" width="80" height="37" viewBox="0 0 80 37">
<defs><linearGradient id="hg" x1="0" y1="0" x2="0" y2="1"><stop offset="0" stop-color="#b7c83a"/><stop offset="0.6" stop-color="#6ea21a"/><stop offset="1" stop-color="#3f7a10"/></linearGradient>
<linearGradient id="hg2" x1="0" y1="0" x2="1" y2="0"><stop offset="0" stop-color="#b9c234"/><stop offset="1" stop-color="#5a8f14"/></linearGradient></defs>
<path d="M0 37C5 30 12 28 20 25C28 16 33 5 43 5C52 5 60 15 70 24L80 25V37Z" fill="url(#hg)"/>
<path d="M66 26L80 25V37H60Z" fill="url(#hg2)"/>
<path d="M27 18C35 21 52 21 62 18" stroke="#5e5a70" stroke-width="1.8" fill="none"/><path d="M26 20C35 23 53 23 63 20" stroke="#d8d0e8" stroke-width="1.6" fill="none"/>
<path d="M31 11C37 14 49 14 55 11" stroke="#5e5a70" stroke-width="1.6" fill="none"/><path d="M30 13C37 16 50 16 56 13" stroke="#d8d0e8" stroke-width="1.4" fill="none"/>
<path d="M21 25C33 29 56 29 70 25" stroke="#5e5a70" stroke-width="1.8" fill="none"/><path d="M20 27C33 31 57 31 71 27" stroke="#d8d0e8" stroke-width="1.6" fill="none"/>
<path d="M38 7C41 9 46 9 49 7" stroke="#5e5a70" stroke-width="1.4" fill="none"/>
<path d="M14.5 1L17 3.8L19.5 2.5L18.5 5.5L21 8L17.8 7.8L16.8 10.5L15.5 7.5L12.5 7L15.2 5Z" fill="#e87ef0"/>
<circle cx="65" cy="10" r="1.9" fill="#6fd8ea"/><circle cx="76" cy="19" r="1.9" fill="#f5a623"/>
</svg>
<svg style="left:408px;top:740px" width="16" height="16" viewBox="0 0 16 16" fill="none" stroke="#fff" stroke-width="1.8"><circle cx="8" cy="8" r="6.8"/></svg>
<svg style="left:455px;top:740px" width="18" height="16" viewBox="0 0 18 16" fill="none" stroke="#fff" stroke-width="1.2"><path d="M0.6 0.6H10.5M0.6 15.4H10.5"/><rect x="1.5" y="3.5" width="9" height="9"/><path d="M15.5 0V2.5M15.5 5V15.5"/></svg>
<svg style="left:502px;top:736px" width="24" height="24" viewBox="0 0 24 24">
<defs><linearGradient id="eg1" x1="0" y1="0" x2="1" y2="1"><stop offset="0" stop-color="#35c1f1"/><stop offset="0.5" stop-color="#1c8fd8"/><stop offset="1" stop-color="#54d36a"/></linearGradient><linearGradient id="eg2" x1="0" y1="0" x2="0" y2="1"><stop offset="0" stop-color="#0c59a4"/><stop offset="1" stop-color="#114a8b"/></linearGradient></defs>
<path d="M12 0.2C18.5 0.2 23.8 5 23.8 11C23.8 14.5 21 16.5 17.5 16.5C14.5 16.5 12.5 15 12.5 13C12.5 12 13.5 11.5 13.5 10.3C13.5 8 11 6.5 8.5 6.5C4 6.5 0.5 10 0.2 13.5C0.5 5.5 6 0.2 12 0.2Z" fill="url(#eg1)"/>
<path d="M0.2 13.5C0.5 10 4 6.5 8.5 6.5C11 6.5 13.5 8 13.5 10.3C13.5 11.5 12.5 12 12.5 13C12.5 15 14.5 16.5 17.5 16.5C19.5 16.5 21.5 15.5 22.5 14.5C21 20 16.5 23.8 11.5 23.8C5 23.8 0.2 19 0.2 13.5Z" fill="#1a7fd4"/>
<path d="M8 10C5.5 11 4 13.5 4.5 16.5C5 20 8.5 23 12.5 23.6C9 22 7.5 19 7.5 16C7.5 13 9.5 11 8 10Z" fill="url(#eg2)"/>
</svg>
<svg style="left:550px;top:739px" width="23" height="18" viewBox="0 0 23 18"><path d="M0 1.2A1.2 1.2 0 0 1 1.2 0H8L9.5 2H21.8A1.2 1.2 0 0 1 23 3.2V16.8A1.2 1.2 0 0 1 21.8 18H1.2A1.2 1.2 0 0 1 0 16.8Z" fill="#e8a93a"/><path d="M0 4H23V16.8A1.2 1.2 0 0 1 21.8 18H1.2A1.2 1.2 0 0 1 0 16.8Z" fill="#fcd66a"/><path d="M6.5 18V11.5A1 1 0 0 1 7.5 10.5H15.5A1 1 0 0 1 16.5 11.5V18H13.5V13.8H9.5V18Z" fill="#2a86d6"/></svg>
<div class="a" style="left:543px;top:766px;width:39px;height:2px;background:#76b9ed"></div>
<svg style="left:598px;top:736px" width="23" height="23" viewBox="0 0 23 23"><path d="M7 5.5C7 2 9 0.6 11.5 0.6C14 0.6 16 2 16 5.5" fill="none" stroke="#fff" stroke-width="1.4"/><path d="M9 5.5C9 3 10 1.8 11.5 1.8" fill="none" stroke="#fff" stroke-width="1"/><path d="M0 5.5H23V21.5A1.5 1.5 0 0 1 21.5 23H1.5A1.5 1.5 0 0 1 0 21.5Z" fill="#fff"/><rect x="6" y="9.5" width="5" height="5" fill="#f25022"/><rect x="12" y="9.5" width="5" height="5" fill="#7fba00"/><rect x="6" y="15.5" width="5" height="5" fill="#00a4ef"/><rect x="12" y="15.5" width="5" height="5" fill="#ffb900"/></svg>
<svg style="left:646px;top:738px" width="24" height="19" viewBox="0 0 24 19"><path d="M0 6.5L12 0L24 6.5V19H0Z" fill="#fff"/><path d="M0 6.5L12 10.5L24 6.5" fill="none" stroke="#1f3640" stroke-width="1.6"/><path d="M13 10.2L24 6.5L16 13.5Z" fill="#1f3640"/></svg>
<svg style="left:694px;top:736px" width="28" height="26" viewBox="0 0 28 26"><circle cx="11" cy="11" r="11" fill="#2aa3df"/><path d="M4.5 10.8L16.5 6C17 5.8 17.5 6.2 17.3 6.8L15.3 15.5C15.1 16 14.6 16.2 14.2 15.9L11 13.5L9.5 15C9.3 15.2 9 15.1 9 14.8V12.5L15 7.5L8 11.8L5 10.8Z" fill="#fff"/><rect x="10" y="15.5" width="16.5" height="10" rx="1.5" fill="#e8362d"/><text x="11.5" y="24" font-family="Liberation Sans" font-size="8" fill="#fff">..79</text></svg>
<div class="a" style="left:687px;top:766px;width:39px;height:2px;background:#76b9ed"></div>
<svg style="left:743px;top:737px" width="22" height="23" viewBox="0 0 22 23"><path d="M11 0.8C16.7 0.8 21.2 5.2 21.2 10.8C21.2 16.5 16.7 20.9 11 20.9C9.2 20.9 7.5 20.4 6 19.6L0.8 21.8L2.6 16.8C1.5 15.2 0.8 13.1 0.8 10.8C0.8 5.2 5.3 0.8 11 0.8Z" fill="#fff"/><path d="M11 2.6C15.7 2.6 19.4 6.3 19.4 10.8C19.4 15.4 15.7 19.1 11 19.1C9.4 19.1 7.9 18.6 6.6 17.8L3.6 18.8L4.6 15.9C3.6 14.5 2.6 12.7 2.6 10.8C2.6 6.3 6.3 2.6 11 2.6Z" fill="#2fbe4c"/><path d="M7.2 6.5C7.6 6 8.3 6 8.6 6.6L9.5 8.5C9.7 9 9.4 9.4 9 9.8C9.6 11.3 10.8 12.5 12.3 13.1C12.7 12.7 13.1 12.3 13.6 12.6L15.4 13.5C16 13.8 16 14.5 15.5 15C14.5 16 13 16 11.5 15.2C9.2 14 7.7 12.3 6.8 10.3C6.3 9 6.4 7.5 7.2 6.5Z" fill="#fff"/></svg>
<svg style="left:790px;top:736px" width="24" height="24" viewBox="0 0 24 24"><circle cx="12" cy="12" r="11.5" fill="#db4437"/><path d="M12 12L2 5.8A11.5 11.5 0 0 0 6.2 22L12 12Z" fill="#0f9d58"/><path d="M12 12L6.2 22A11.5 11.5 0 0 0 23.5 12H12Z" fill="#ffcd40"/><path d="M12 6.5H22.3A11.5 11.5 0 0 1 23.5 12L12 12Z" fill="#ffcd40"/><circle cx="12" cy="12" r="5.3" fill="#fff"/><circle cx="12" cy="12" r="4.2" fill="#4285f4"/></svg>
<div class="a" style="left:783px;top:766px;width:39px;height:2px;background:#76b9ed"></div>
<svg style="left:838px;top:736px" width="24" height="24" viewBox="0 0 24 24"><circle cx="12" cy="12" r="11.8" fill="#b4401d"/><path d="M8.5 19.5L10.8 5.5H16.5C18.5 5.5 19.5 7 19.2 9C18.9 11 17.5 12.5 15.5 12.5H12L11 19.5Z" fill="#fff"/><path d="M12.9 8H16C16.6 8 17 8.5 16.9 9C16.8 9.6 16.3 10 15.7 10H12.5Z" fill="#b4401d"/><path d="M6 5.5H10.5L10.1 8H5.6Z" fill="#fff"/></svg>
<div class="a" style="left:831px;top:766px;width:39px;height:2px;background:#76b9ed"></div>
<svg style="left:885px;top:737px" width="25" height="22" viewBox="0 0 25 22"><path d="M6 0H23.5A1.5 1.5 0 0 1 25 1.5V20.5A1.5 1.5 0 0 1 23.5 22H7.5A1.5 1.5 0 0 1 6 20.5Z" fill="#41a5ee"/><path d="M6 5.5H25V11H6Z" fill="#2b7cd3"/><path d="M6 11H25V16.5H6Z" fill="#185abd"/><path d="M6 16.5H25V20.5A1.5 1.5 0 0 1 23.5 22H7.5A1.5 1.5 0 0 1 6 20.5Z" fill="#103f91"/><rect x="0" y="5" width="13" height="13" rx="1" fill="#185abd"/><path d="M2 8L3.5 15H5L6.5 10.5L8 15H9.5L11 8H9.6L8.7 12.6L7.2 8H5.8L4.3 12.6L3.4 8Z" fill="#fff"/></svg>
<div class="a" style="left:879px;top:766px;width:39px;height:2px;background:#76b9ed"></div>
<div class="a" style="left:923px;top:728px;width:47px;height:38px;background:#4b5866"></div>
<svg style="left:933px;top:737px" width="26" height="22" viewBox="0 0 26 22"><path d="M15 0A11 11 0 0 1 26 11H15Z" fill="#ff8f6b"/><path d="M26 11A11 11 0 0 1 4 11H15Z" fill="#d35230"/><path d="M15 0V11H4A11 11 0 0 1 15 0Z" fill="#ed6c47"/><rect x="0" y="5" width="13" height="13" rx="1" fill="#c43e1c"/><path d="M4 8H7.8C9.5 8 10.3 9 10.3 10.3C10.3 11.7 9.5 12.6 7.8 12.6H5.6V15.2H4ZM5.6 9.3V11.3H7.6C8.3 11.3 8.7 11 8.7 10.3C8.7 9.6 8.3 9.3 7.6 9.3Z" fill="#fff"/></svg>
<div class="a" style="left:923px;top:766px;width:47px;height:2px;background:#76b9ed"></div>
<svg style="left:999px;top:737px" width="23" height="22" viewBox="0 0 23 22"><defs><radialGradient id="sg" cx="0.4" cy="0.35" r="0.7"><stop offset="0" stop-color="#ffd21a"/><stop offset="1" stop-color="#f08a10"/></radialGradient></defs><circle cx="10.5" cy="10.5" r="10.5" fill="url(#sg)"/><path d="M8.5 20C6.5 20 5.5 18.8 5.5 17.5C5.5 16 6.8 15 8.2 15.2C8.8 13.2 10.5 12 12.5 12C15 12 16.8 13.8 17 16C19.5 15.8 22 17 22 18.5C22 19.5 21 20 20 20Z" fill="#e6edf5"/></svg>
<div class="t w" style="left:1030px;top:742px;font-size:13.5px">97°F</div>
<svg style="left:1075px;top:744px" width="13" height="8" viewBox="0 0 13 8" fill="none" stroke="#fff" stroke-width="1.2"><path d="M0.5 7.5L6.5 1L12.5 7.5"/></svg>
<svg style="left:1100px;top:740px" width="12" height="16" viewBox="0 0 12 16" fill="none" stroke="#fff" stroke-width="1.1"><path d="M2 2.5C2 1.2 3 0.5 4 0.5H7M2 13.5C2 14.8 3 15.5 4 15.5H7"/><rect x="0.6" y="5" width="7.5" height="6.5" rx="1"/><path d="M8.5 8L11.3 5.5V11L8.5 8.5Z"/></svg>
<svg style="left:1120px;top:743px" width="18" height="11" viewBox="0 0 18 11"><path d="M4 10.5C1.8 10.5 0.3 9.3 0.3 7.5C0.3 5.8 1.7 4.5 3.6 4.6C4.3 2 6.5 0.3 9.3 0.3C12.2 0.3 14.5 2.3 14.8 5C16.8 5.2 17.8 6.5 17.8 8C17.8 9.5 16.5 10.5 15 10.5Z" fill="#e0e0e0"/><path d="M4 10.5C2 10.5 0.5 9.5 0.5 7.8C0.5 6.5 1.5 5.5 3 5.3L8 8.5L15 6.5C16.8 6.8 17.8 7.5 17.8 8.5C17.8 9.8 16.5 10.5 15 10.5Z" fill="#bdbdbd"/></svg>
<svg style="left:1144px;top:741px" width="18" height="12" viewBox="0 0 18 12" fill="none" stroke="#fff" stroke-width="1.1"><path d="M2.5 0V3M5.5 0V3M1 3H7V5.5C7 7 5.5 8 4 8C2.5 8 1 7 1 5.5Z" stroke-width="1"/><path d="M4 8V11.5H16.5V4H8"/><path d="M16.5 6H17.5V9.5H16.5"/><rect x="5.5" y="5" width="5.5" height="5.5" fill="#fff" stroke="none"/></svg>
<svg style="left:1171px;top:743px" width="14" height="12" viewBox="0 0 14 12" fill="none" stroke="#fff" stroke-width="1.1"><path d="M0.5 11.5A11 11 0 0 1 11.5 0.5"/><path d="M3.2 11.5A8.3 8.3 0 0 1 11.5 3.2"/><path d="M5.9 11.5A5.6 5.6 0 0 1 11.5 5.9"/><circle cx="11" cy="10.5" r="1.6" fill="#fff" stroke="none"/></svg>
<svg style="left:1192px;top:741px" width="18" height="14" viewBox="0 0 18 14" fill="none" stroke="#fff" stroke-width="1.1"><path d="M0.6 4.5H3.5L8 0.8V13.2L3.5 9.5H0.6Z"/><path d="M10 5C10.8 5.8 10.8 8.2 10 9"/><path d="M12 3.2C13.5 4.8 13.5 9.2 12 10.8"/><path d="M14.5 1.5C16.5 3.8 16.5 10.2 14.5 12.5" stroke="#8a8a9a"/></svg>
<div class="t w" style="left:1226px;top:742px;font-size:12px">فا</div>
<div class="t w" style="left:1260px;top:733px;font-size:12px">5:56 PM</div>
<div class="t w" style="left:1256px;top:751px;font-size:12px;letter-spacing:-0.3px">7/12/2022</div>
<svg style="left:1325px;top:740px" width="17" height="16" viewBox="0 0 17 16" fill="none" stroke="#fff" stroke-width="1.1"><path d="M0.6 0.6H16.2V12.3H10.5L8.4 15L6.3 12.3H0.6Z"/></svg>
<div class="a" style="left:1361px;top:728px;width:1px;height:40px;background:#5a6478"></div>
</body></html>
